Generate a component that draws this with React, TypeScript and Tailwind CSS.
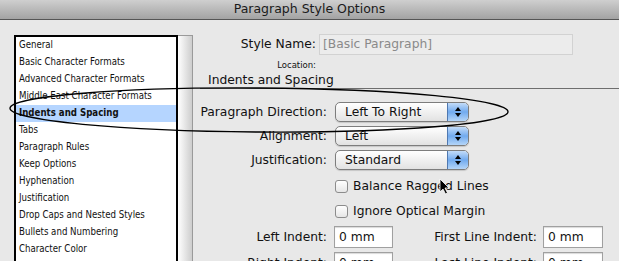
const sections = [
  'General',
  'Basic Character Formats',
  'Advanced Character Formats',
  'Middle East Character Formats',
  'Indents and Spacing',
  'Tabs',
  'Paragraph Rules',
  'Keep Options',
  'Hyphenation',
  'Justification',
  'Drop Caps and Nested Styles',
  'Bullets and Numbering',
  'Character Color',
];

const Stepper = () => (
  <div className="flex h-full w-[21px] flex-col items-center justify-center gap-[2px] rounded-r-[4px] border-l border-[#4f78b0] bg-gradient-to-b from-[#c3dcf8] via-[#71aaee] to-[#b4d5f8]">
    <div className="h-0 w-0 border-x-[3px] border-b-[4px] border-x-transparent border-b-black" />
    <div className="h-0 w-0 border-x-[3px] border-t-[4px] border-x-transparent border-t-black" />
  </div>
);

const Select = ({ value }: { value: string }) => (
  <div className="flex h-[20px] w-[134px] items-center overflow-hidden rounded-[5px] border border-[#7d7d7d] bg-gradient-to-b from-white to-[#e2e2e2] shadow-[0_1px_1px_rgba(0,0,0,0.15)]">
    <span className="flex-1 pl-[9px] leading-none">{value}</span>
    <Stepper />
  </div>
);

const Row = ({ label, value }: { label: string; value: string }) => (
  <div className="flex items-center">
    <span className="w-[134px] text-right">{label}</span>
    <div className="ml-[8px]">
      <Select value={value} />
    </div>
  </div>
);

const Check = ({ label }: { label: string }) => (
  <div className="flex h-[16px] items-center pl-[142px]">
    <div className="h-[13px] w-[13px] rounded-[3px] border border-[#8c8c8c] bg-gradient-to-b from-white to-[#e6e6e6]" />
    <span className="ml-[5px]">{label}</span>
  </div>
);

const Field = ({ w }: { w: string }) => (
  <div className={`flex h-[22px] items-center border border-[#a0a0a0] bg-white pl-[4px] shadow-[inset_0_1px_1px_rgba(0,0,0,0.15)] ${w}`}>
    0 mm
  </div>
);

export default function App() {
  return (
    <div className="relative h-[261px] w-[619px] overflow-hidden bg-[#e8e8e8] font-['DejaVu_Sans',sans-serif] text-[12.3px] text-[#111]">
      <div className="flex h-[20px] items-center justify-center border-b border-[#555] bg-gradient-to-b from-[#cfcfcf] to-[#a3a3a3] text-[12.5px] text-[#1a1a1a]">
        Paragraph Style Options
      </div>

      <div className="flex">
        <div className="flex pl-[14px] pt-[15px]">
          <div className="h-[260px] w-[164px] border-2 border-b-0 border-black bg-white font-['DejaVu_Sans_Condensed','DejaVu_Sans',sans-serif] text-[9.6px] text-[#111]">
            {sections.map((s) => (
              <div
                key={s}
                className={`flex h-[17px] items-center pl-[3px] ${s === 'Indents and Spacing' ? 'bg-[#b5d5ff] font-bold' : ''}`}
              >
                {s}
              </div>
            ))}
          </div>
          <div className="h-[260px] w-[15px] border-r border-t border-[#9a9a9a] bg-gradient-to-r from-white via-[#e6e6e6] to-[#cdcdcd]" />
        </div>

        <div className="flex flex-1 flex-col pt-[14px]">
          <div className="flex h-[21px] items-center">
            <span className="w-[123px] text-right">Style Name:</span>
            <div className="ml-[3px] flex h-[21px] w-[254px] items-center border border-[#d2d2d2] bg-[#ececec] pl-[3px] text-[#8a8a8a]">
              [Basic Paragraph]
            </div>
          </div>
          <div className="mt-[3px] flex h-[14px] items-center">
            <span className="w-[123px] text-right text-[8.5px]">Location:</span>
          </div>
          <div className="ml-[7px] flex h-[17px] items-center border-b border-[#6e6e6e] pl-[8px]">
            Indents and Spacing
          </div>

          <div className="mt-[13px] flex flex-col gap-[4px]">
            <Row label="Paragraph Direction:" value="Left To Right" />
            <Row label="Alignment:" value="Left" />
            <Row label="Justification:" value="Standard" />
          </div>

          <div className="mt-[8px]">
            <Check label="Balance Ragged Lines" />
          </div>
          <div className="mt-[9px]">
            <Check label="Ignore Optical Margin" />
          </div>

          <div className="mt-[7px] flex items-center">
            <span className="w-[134px] text-right">Left Indent:</span>
            <div className="ml-[7px]">
              <Field w="w-[59px]" />
            </div>
            <span className="w-[144px] text-right">First Line Indent:</span>
            <div className="ml-[6px]">
              <Field w="w-[60px]" />
            </div>
          </div>
          <div className="mt-[4px] flex items-center">
            <span className="w-[134px] text-right">Right Indent:</span>
            <div className="ml-[7px]">
              <Field w="w-[59px]" />
            </div>
            <span className="w-[144px] text-right">Last Line Indent:</span>
            <div className="ml-[6px]">
              <Field w="w-[60px]" />
            </div>
          </div>
        </div>
      </div>

      <svg className="pointer-events-none absolute left-0 top-0" width="619" height="261">
        <ellipse cx="259" cy="110" rx="249" ry="22" fill="none" stroke="#000" strokeWidth="1.4" transform="rotate(0.4 259 110)" />
        <path d="M440 179 L440 192 L443 189 L445.5 194 L447.5 193 L445 188 L449 188 Z" fill="#000" stroke="#fff" strokeWidth="0.8" />
      </svg>
    </div>
  );
}
